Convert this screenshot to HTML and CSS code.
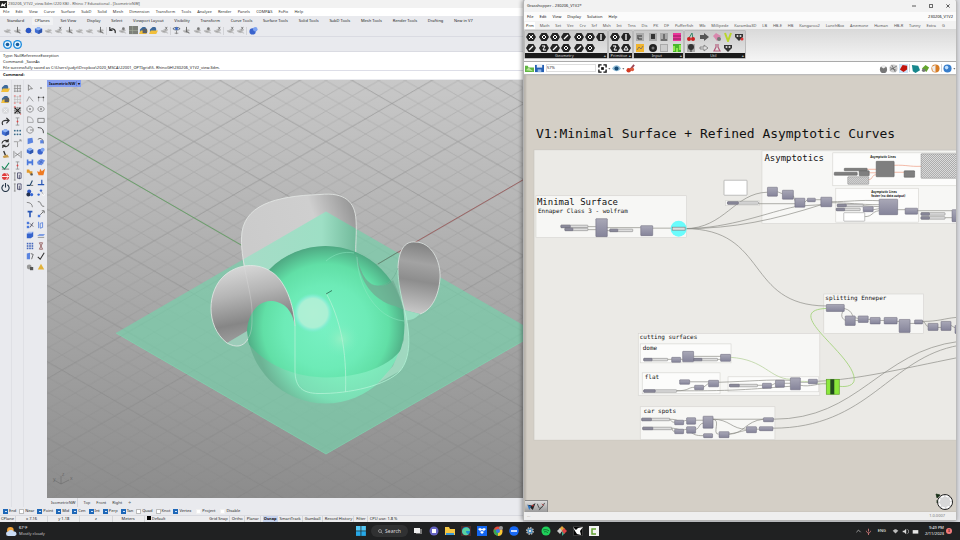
FILE: index.html
```html
<!DOCTYPE html>
<html lang="en">
<head>
<meta charset="utf-8">
<title>Rhino and Grasshopper</title>
<link rel="stylesheet" href="styles.css">
</head>
<body>
<main class="desktop">
  <section class="rhino" aria-label="Rhino">
    <header class="titlebar">
      <svg class="app-icon" viewBox="0 0 10 10"><rect width="10" height="10" fill="#222"/><path d="M1 8L3 3l2 2 4-3-2 4 1 3-3-2z" fill="#fff"/></svg>
      <span>230206_V1V2_view.3dm (220 KB) - Rhino 7 Educational - [IsometricNW]</span>
    </header>
    <nav class="menu" aria-label="Rhino menu">
      <a href="#">File</a><a href="#">Edit</a><a href="#">View</a><a href="#">Curve</a><a href="#">Surface</a><a href="#">SubD</a><a href="#">Solid</a><a href="#">Mesh</a><a href="#">Dimension</a><a href="#">Transform</a><a href="#">Tools</a><a href="#">Analyze</a><a href="#">Render</a><a href="#">Panels</a><a href="#">COMPAS</a><a href="#">FoFix</a><a href="#">Help</a>
    </nav>
    <div class="tool-tabs">
      <button>Standard</button><button class="active">CPlanes</button><button>Set View</button><button>Display</button><button>Select</button><button>Viewport Layout</button><button>Visibility</button><button>Transform</button><button>Curve Tools</button><button>Surface Tools</button><button>Solid Tools</button><button>SubD Tools</button><button>Mesh Tools</button><button>Render Tools</button><button>Drafting</button><button>New in V7</button>
    </div>
    <div class="toolbar"><div data-icons="plane axis sphere cube plane planex axis plane plane axis | undo planey darkgrid savefolder folder planex | eye axis planey planey planex | planex planex | cubes"></div></div>
    <div class="toolbar second"><div data-icons="ring ring"></div></div>
    <div class="history">
      <p>Type: NullReferenceException</p>
      <p>Command: _SaveAs</p>
      <p>File successfully saved as C:\Users\judyt\Dropbox\2020_MSCA\22001_OPTIgrid\5. RhinoGH\230206_V1V2_view.3dm.</p>
    </div>
    <div class="prompt"><label for="cmd">Command:</label><input id="cmd" type="text"></div>
    <div class="work">
      <div class="side narrow" data-icons="folder savefolder close redo cube refresh brush check redball power"></div>
      <div class="side narrow" data-icons="grid gridred netx vdim dots corner hx vdim vbox vbox"></div>
      <div class="side wide" data-icons="arrow point polyline curve circle ellipse arc rect ring2 fillet patch bend cube cubes pipe mesh puzzle burst trim split spheres dotsblue arc2 blend text scale arrayx align slab plate array hourglass cut tick hide cone"></div>
      <div class="view">
        <div class="viewport">
          <button class="view-title">IsometricNW <span>▾</span></button>
          <svg class="scene" viewBox="47 80 476 418" preserveAspectRatio="xMidYMid slice" role="img" aria-label="Isometric view of a sphere, a cutting plane and a minimal surface">
            <defs>
              <linearGradient id="ground" gradientUnits="userSpaceOnUse" x1="0" y1="80" x2="0" y2="498"><stop offset="0" stop-color="#c8c8c8"/><stop offset="1" stop-color="#8c8c8c"/></linearGradient>
              <linearGradient id="fade" gradientUnits="userSpaceOnUse" x1="0" y1="80" x2="0" y2="498"><stop offset="0" stop-color="#fff"/><stop offset=".7" stop-color="#999"/><stop offset="1" stop-color="#444"/></linearGradient>
              <mask id="gridfade"><rect x="0" y="0" width="600" height="560" fill="url(#fade)"/></mask>
              <pattern id="minor" width="26.4" height="15.24" patternUnits="userSpaceOnUse" patternTransform="translate(326 294)"><path d="M0 0L26.4 15.24M26.4 0L0 15.24" stroke="#555" stroke-width=".5" opacity=".3"/></pattern>
              <pattern id="major" width="132" height="76.2" patternUnits="userSpaceOnUse" patternTransform="translate(326 294)"><path d="M0 0L132 76.2M132 0L0 76.2" stroke="#444" stroke-width=".6" opacity=".25"/></pattern>
              <radialGradient id="ball" gradientUnits="userSpaceOnUse" cx="326" cy="327" r="84"><stop offset="0" stop-color="#78f1c3"/><stop offset=".5" stop-color="#6debb7"/><stop offset=".75" stop-color="#61dfa6"/><stop offset="1" stop-color="#4b9f7c"/></radialGradient>
              <radialGradient id="low" gradientUnits="userSpaceOnUse" cx="345" cy="335" r="88"><stop offset=".4" stop-color="#80efbf"/><stop offset=".75" stop-color="#7bdfb5"/><stop offset="1" stop-color="#6cb294"/></radialGradient>
              <linearGradient id="back" x1="0" y1=".3" x2="1" y2="0"><stop offset="0" stop-color="#cbcbcb"/><stop offset=".6" stop-color="#cfcfcf"/><stop offset="1" stop-color="#8c8c8c"/></linearGradient>
              <linearGradient id="backgreen" x1="0" y1="0" x2="1" y2="0"><stop offset="0" stop-color="#a6dcc7"/><stop offset=".7" stop-color="#9edfc5"/><stop offset="1" stop-color="#72ba9b"/></linearGradient>
              <linearGradient id="ear" x1=".3" y1="0" x2=".5" y2=".9"><stop offset="0" stop-color="#d9d9d9"/><stop offset=".4" stop-color="#b5b5b5"/><stop offset=".8" stop-color="#868686"/><stop offset="1" stop-color="#999"/></linearGradient>
              <linearGradient id="ear2" x1=".6" y1="0" x2=".5" y2="1"><stop offset="0" stop-color="#7f7f7f"/><stop offset=".3" stop-color="#a3a3a3"/><stop offset=".55" stop-color="#8d8d8d"/><stop offset="1" stop-color="#c8c8c8"/></linearGradient>
              <radialGradient id="shine"><stop offset="0" stop-color="#b0f0d4"/><stop offset=".72" stop-color="#acf0d4"/><stop offset=".85" stop-color="#84eed1"/><stop offset="1" stop-color="#75eec6" stop-opacity="0"/></radialGradient>
              <radialGradient id="shine2"><stop offset="0" stop-color="#94f0c4"/><stop offset="1" stop-color="#75eec0" stop-opacity="0"/></radialGradient>
              <clipPath id="planeclip"><path d="M116 333L326 211.500L537 333L326 454z"/></clipPath>
              <clipPath id="domeclip"><path d="M240 240H410V334C402 358 375 377 326 377.500C290 377 262 362 246 341z"/></clipPath>
            </defs>
            <rect x="0" y="0" width="600" height="560" fill="url(#ground)"/>
            <g mask="url(#gridfade)"><rect x="0" y="0" width="600" height="560" fill="url(#minor)"/><rect x="0" y="0" width="600" height="560" fill="url(#major)"/></g>
            <path d="M47 133L326 294" stroke="#5c9f5c" stroke-width=".8"/>
            <path d="M326 294L540 170" stroke="#9a5555" stroke-width=".8"/>
            <path d="M116 333L326 211.500L537 333L326 454z" fill="#78d0ab" opacity=".7"/>
            <path d="M116 333L326 454L537 333" fill="none" stroke="#7fd6b0" stroke-width=".7"/>
            <path d="M249 290C244 266 241 250 241.500 238C242 205 275 196 320 194.500C345 192 355 202 356 220C357 235 355 245 356 258L330 262L270 275z" fill="url(#back)"/>
            <path d="M249 290C244 266 241 250 241.500 238C242 205 275 196 320 194.500C345 192 355 202 356 220C357 235 355 245 356 258L330 262L270 275z" fill="url(#backgreen)" clip-path="url(#planeclip)"/>
            <path d="M249 290C244 266 241 250 241.500 238C242 205 275 196 320 194.500C345 192 355 202 356 220C357 235 355 245 356 258" fill="none" stroke="#e4e8e6" stroke-width=".8"/>
            <circle cx="325.500" cy="325" r="78.500" fill="url(#low)"/>
            <path d="M400 371C411 358 411 335 404 308L404 340L393 366L378 383z" fill="#a8ddc6" opacity=".8"/>
            <circle cx="325.500" cy="325" r="79" fill="url(#ball)" clip-path="url(#domeclip)"/>
            <circle cx="341" cy="339" r="18" fill="url(#shine2)"/>
            <circle cx="313" cy="313" r="20" fill="url(#shine)"/>
            <path d="M398 270C398 250 405 241 415 242C432 242 441 262 440 278C439 295 432 310 420 314L404 310C401 300 398 285 398 270z" fill="url(#ear2)"/>
            <path d="M404 310L420 314C415 319 410 321 405 320z" fill="#9bddc2"/>
            <path d="M357 257C361 276 368 286 378 286C386 286 391 283 393 280C397 288 401 300 404 310L395 306C374 301 359 281 357 257z" fill="#71aa92" opacity=".75"/>
            <path d="M398 270C398 250 405 241 415 242C432 242 441 262 440 278C439 295 432 310 420 314" fill="none" stroke="#e0e6e3" stroke-width=".8"/>
            <path d="M356 255C360 275 368 286 378 286C388 285 393 281 398 268" fill="none" stroke="#6fae94" stroke-width=".6"/>
            <path d="M227 343C205 326 207 290 225 275C242 261 261 265 270 271C285 279 294 305 295 326C292 308 282 301 270 301C255 302 247 318 247 332z" fill="url(#ear)"/>
            <path d="M227 343L247 331L248 339C243 347 236 348 227 343z" fill="#9cccb9"/>
            <path d="M248 339C243 347 236 348 227 343C205 326 207 290 225 275C242 261 261 265 270 271C285 279 294 305 295 326" fill="none" stroke="#e4e8e6" stroke-width=".8"/>
            <path d="M243 258C246 280 253 300 252 316C252 326 252 333 247 340" fill="none" stroke="#ddd" stroke-width=".6" opacity=".6"/>
            <path d="M295 326V370C295 388 303 393 318 393.500C350 394 387 385 400 371C411 358 411 335 404 308C401 296 398 282 398 270M326 293C340 318 347 350 345.500 392" fill="none" stroke="#b2f2d6" stroke-width=".8"/>
            <path d="M326 261C334 254 344 251 354 253M357 257C358 285 375 318 404 321" fill="none" stroke="#8fe9c3" stroke-width=".5"/>
            <path d="M326 294L332 290.500" stroke="#286b50" stroke-width=".8"/>
            <path d="M378 264L398 252" stroke="#5d7d6b" stroke-width=".8"/>
            <g stroke="#6c6c6c" stroke-width=".6" fill="none"><path d="M61 484V476M61 484L54 480M61 484L69 480"/></g>
            <g class="axis-names"><text x="62" y="476">z</text><text x="53" y="481">y</text><text x="70" y="480">x</text></g>
          </svg>
        </div>
        <div class="view-tabs"><button class="active">IsometricNW</button><button>Top</button><button>Front</button><button>Right</button><button aria-label="Add view">✧</button></div>
      </div>
    </div>
    <div class="osnap">
      <label><input type="checkbox" checked>End</label><label><input type="checkbox">Near</label><label><input type="checkbox" checked>Point</label><label><input type="checkbox" checked>Mid</label><label><input type="checkbox" checked>Cen</label><label><input type="checkbox" checked>Int</label><label><input type="checkbox" checked>Perp</label><label><input type="checkbox" checked>Tan</label><label><input type="checkbox">Quad</label><label><input type="checkbox">Knot</label><label><input type="checkbox" checked>Vertex</label><label class="faint"><input type="checkbox">Project</label><label class="faint"><input type="checkbox">Disable</label>
    </div>
    <footer class="status">
      <div class="coords"><span>CPlane</span><span>x 7.16</span><span>y 1.18</span><span>z</span><span>Meters</span><span><i class="swatch"></i>Default</span></div>
      <div class="toggles"><button>Grid Snap</button><button>Ortho</button><button>Planar</button><button class="on">Osnap</button><button>SmartTrack</button><button>Gumball</button><button>Record History</button><button>Filter</button><span>CPU use: 1.8 %</span></div>
    </footer>
  </section>

  <section class="gh" aria-label="Grasshopper">
    <header class="gh-title"><span>Grasshopper - 230206_V1V2*</span>
      <div class="win"><button aria-label="Minimize"><svg viewBox="0 0 10 10"><path d="M0 5h10"/></svg></button><button aria-label="Maximize"><svg viewBox="0 0 10 10"><path d="M1 1h8v8H1z"/></svg></button><button aria-label="Close"><svg viewBox="0 0 10 10"><path d="M1 1l8 8M9 1L1 9"/></svg></button></div>
    </header>
    <nav class="gh-menu" aria-label="Grasshopper menu"><a href="#">File</a><a href="#">Edit</a><a href="#">View</a><a href="#">Display</a><a href="#">Solution</a><a href="#">Help</a><span>230206_V1V2</span></nav>
    <div class="gh-tabs">
      <button class="active">Prm</button><button>Math</button><button>Set</button><button>Vec</button><button>Crv</button><button>Srf</button><button>Msh</button><button>Int</button><button>Trns</button><button>Dis</button><button>PK</button><button>DF</button><button>Pufferfish</button><button>Wb</button><button>Millipede</button><button>Karamba3D</button><button>LB</button><button>HB-E</button><button>HB</button><button>Kangaroo2</button><button>LunchBox</button><button>Anemone</button><button>Human</button><button>HB-R</button><button>Tunny</button><button>Extra</button><button>G</button>
    </div>
    <div class="ribbon">
      <div class="group"><div class="cells"><div data-icons="hexx hexs"></div><div data-icons="hexo hexz hexo hexs hexs hexo"></div><div data-icons="hexo hexs hexo hexo hexi"></div></div><p>Geometry<b>+</b></p></div>
      <div class="group"><div class="cells"><div data-icons="hexo hexz hexi hexa"></div></div><p>Primitive<b>+</b></p></div>
      <div class="group"><div class="cells"><div data-icons="slider graph"></div><div data-icons="switch knob scribble panel"></div><div data-icons="pink green"></div></div><p>Input<b>+</b></p></div>
      <div class="group"><div class="cells"><div data-icons="cherry tree"></div><div data-icons="right rightopen"></div><div data-icons="gem flask vee mask mask2"></div></div><p>Util<b>+</b></p></div>
    </div>
    <div class="gh-bar">
      <div data-icons="newfile floppy"></div>
      <select aria-label="Zoom"><option>57%</option></select>
      <div data-icons="frame caret eyeblue caret brushred"></div>
      <div class="modes" data-icons="cyl wire gemred | teal leaf orange | globe caret"></div>
    </div>
    <div class="canvas">
      <svg viewBox="524 75 433 438" preserveAspectRatio="xMinYMin slice" role="img" aria-label="Node graph">
        <defs>
          <linearGradient id="node" x1="0" y1="0" x2="0" y2="1"><stop offset="0" stop-color="#a9a8b7"/><stop offset="1" stop-color="#85849a"/></linearGradient>
          <pattern id="check" width="2" height="2" patternUnits="userSpaceOnUse"><rect width="2" height="2" fill="#eee"/><path d="M0 0h1v1H0zM1 1h1v1H1z" fill="#999"/></pattern>
        </defs>
        <rect x="534" y="150" width="430" height="291" fill="#ebeae6" stroke="#c6c2bb" stroke-width=".6"/>
        <g id="groups"></g>
        <g class="wires">
          <path d="M588 227h8M588 230h8M607 228h34M607 231h3M653 228.500h19"/>
          <path d="M685 229C725 229 735 193 768 192.500M685 229C730 229 770 212 796 207M685 229C735 229 775 220 822 205M685 229C770 229 745 306 827 306.500"/>
          <path d="M759 204H796M778 192l5 2M794 196l2 6M805 203l3-3M816 200l6 0M805 206l17-1M832 202C850 202 860 200 880 201M832 203C850 203 860 205 880 205M864 206l16 1M874 210l6-1M865 217C874 217 872 212 880 211M898 210h8M918 211h35M946 218h7"/>
          <path d="M845 309C856 312 850 318 859 319M845 309C838 320 848 321 846 321M856 321h3M869 320h2M881 321h4M898 322h2M911 324h5M923 322C940 322 945 319 957 318M923 322C927 322 926 327 929 327M939 328h3M952 326l5 3"/>
          <path d="M668 360h4M681 360h2M694 357h27M718 360h3M690 382.500h19M677 391.500C690 391.500 688 388 695 388M704 388l5-4M677 391.500C740 392 760 389 791 387M719 383C750 382 770 380 791 381M758 386h5M772 386l4-2M785 384h6M801 383h8M801 386C810 388 820 384 827 384"/>
          <path d="M670 420C680 420 678 424 687 421M670 420C673 423 672 423 675 423M672 429C678 429 680 432 687 430M672 429C674 432 672 432 675 432M696 421h8M696 430C700 430 699 424 704 424M713 420h51M713 420C722 420 712 435 719 435M713 420C730 420 732 430 747 430M729 435C745 435 745 422 764 420M729 435C740 433 742 432 747 431M757 430h3M687 430C695 436 696 436.500 704 436.500"/>
          <path d="M774 420C860 420 880 352 960 342M773 429C870 429 890 358 960 346M818 382C860 380 900 370 960 358"/>
        </g>
        <g fill="none" stroke="#ed9b82" stroke-width=".7"><path d="M868 169.500h9M870 173h7M869 180C874 180 872 175 877 175M895 165.500C908 165 910 167 922 166.500M895 172.500h10"/></g>
        <g fill="none" stroke-width=".9"><path stroke="#c0d7a9" d="M731 358C765 360 770 379 791 380M801 382C812 382 816 384 827 385"/><path stroke="#a4d37c" d="M827 309C780 311 855 355 855 380C855 386 848 388 840 387"/></g>
        <g id="nodes"></g>
        <circle cx="679" cy="229" r="8" fill="#6afcfc"/><rect x="672.500" y="227.500" width="13" height="3" fill="#ddd" stroke="#777" stroke-width=".6"/>
        <rect x="827" y="380" width="13" height="15" fill="#8be83c" stroke="#5fa02a" stroke-width=".7"/><rect x="831" y="380" width="4" height="15" fill="#234a1f"/>
        <g class="mono">
          <text class="head" x="536" y="138">V1:Minimal Surface + Refined Asymptotic Curves</text>
          <text class="mid" x="537" y="205">Minimal Surface</text><text class="mid" x="765" y="161">Asymptotics</text>
          <text x="538" y="213">Ennaper Class 3 - wolfram</text><text x="826" y="301">splitting Enneper</text><text x="640" y="340">cutting surfaces</text><text x="643" y="351">dome</text><text x="645" y="380">flat</text><text x="644" y="414">car spots</text>
        </g>
        <g class="tiny"><text x="871" y="158">Asymptotic Lines</text><text x="872" y="193">Asymptotic Lines</text><text x="872" y="197">faster (no data output)</text></g>
        <g><circle cx="946" cy="503" r="7.500" fill="#d8d8d8" stroke="#222" stroke-width="1"/><circle cx="946" cy="503" r="6" fill="none" stroke="#fff" stroke-width="1.500" stroke-dasharray="3 1.700"/><path d="M937 495l4 1-3 3zM938 501v3" fill="#162f16" stroke="#162f16" stroke-width=".8"/></g>
      </svg>
      <div class="corner" data-icons="bird pen"></div>
    </div>
    <footer class="gh-status"><span>...</span><span>1.0.0007</span></footer>
  </section>
</main>

<footer class="taskbar">
  <div class="weather"><svg viewBox="0 0 10 10"><circle cx="4" cy="4" r="3" fill="#f3a53a"/><path d="M2 9a2 2 0 0 1 0-4 3 3 0 0 1 5 0 2 2 0 0 1 1 4z" fill="#c9dcf5"/></svg><p>67°F<br><span>Mostly cloudy</span></p></div>
  <div class="apps">
    <div data-icons="windows"></div>
    <button class="search"><svg viewBox="0 0 10 10"><circle cx="4" cy="4" r="3"/><path d="M6 6l3 3"/></svg>Search</button>
    <div class="pinned" data-icons="taskview chat explorer edge dropbox chrome zoom gear spotify git rhino camtasia"></div>
  </div>
  <div class="tray"><div data-icons="up mic"></div><span>ENG</span><div data-icons="wifi volume battery"></div><p>9:49 PM<br>2/11/2023</p><b>3</b></div>
</footer>
<script src="app.js"></script>
</body>
</html>
```

FILE: styles.css
```css
* { box-sizing: border-box; }
body { margin: 0; height: 100vh; display: flex; flex-direction: column; overflow: hidden; background: #dcdde2; color: #222; font: 4px/6px "Noto Sans", "Open Sans", sans-serif; }
p { margin: 0; }
a { color: inherit; text-decoration: none; }
button, input, select { font: inherit; color: inherit; margin: 0; padding: 0; border: 0; background: none; }
button { white-space: nowrap; }
svg { display: block; }
[data-icons] { display: flex; align-items: center; }
[data-icons] button { flex: none; width: 9px; height: 9px; }
[data-icons] svg { width: 100%; height: 100%; }
[data-icons] hr { width: 1px; height: 8px; margin: 0; border: 0; background: #d2d3d7; }

.desktop { flex: 1; min-height: 0; display: grid; grid-template-columns: 523fr 437fr; }
.rhino { min-width: 0; min-height: 0; display: flex; flex-direction: column; background: #e9eaee; }
.titlebar { height: 8px; display: flex; align-items: center; gap: 1px; background: #f2f2f2; color: #555; }
.app-icon { width: 7px; height: 7px; }
.menu { height: 8px; display: flex; align-items: center; justify-content: space-between; padding: 0 42% 0 3px; background: #fff; color: #333; }
.tool-tabs { height: 9px; display: flex; align-items: stretch; justify-content: space-between; padding: 1px 9% 0 4px; }
.tool-tabs button { padding: 0 3px; }
.tool-tabs .active { background: #f1f2f4; border-radius: 2px 2px 0 0; }
.toolbar { height: 12px; display: flex; align-items: center; padding-left: 3px; border-bottom: 1px solid #dadbe2; }
.toolbar [data-icons] { width: 49%; justify-content: space-between; }
.toolbar.second { height: 15px; padding-left: 3px; }
.toolbar.second [data-icons] { width: auto; gap: 1px; }
.history { height: 19px; padding: 1px 3px 0; background: #fff; border-bottom: 1px solid #dddee8; }
.prompt { height: 8px; display: flex; align-items: center; padding-left: 3px; background: #fff; color: #111; font-weight: 700; }
.prompt input { flex: 1; height: 6px; outline: 0; }
.work { flex: 1; min-height: 0; display: flex; padding-top: 1px; }
.side { display: grid; align-content: start; flex: none; padding-top: 3px; border-right: 1px solid #dfe0e5; }
.side.narrow { width: 12px; grid-auto-rows: 11px; justify-items: center; }
.side.wide { width: 23px; height: 192px; grid-template-columns: 11px 11px; align-content: stretch; justify-items: center; border: 0; }
.side.wide button { width: 8px; height: 8px; }
.view { flex: 1; min-width: 0; display: flex; flex-direction: column; }
.viewport { position: relative; flex: 1; min-height: 0; overflow: hidden; }
.scene { width: 100%; height: 100%; }
.view-title { position: absolute; top: 0; left: 0; height: 7px; padding: 0 1px 0 2px; background: #849df0; color: #112; font-weight: 700; line-height: 7px; }
.view-title span { padding-left: 1px; border-left: 1px solid #6d83ce; }
.axis-names { font: 5px "Open Sans", sans-serif; fill: #666; }
.view-tabs { height: 9px; display: flex; align-items: stretch; gap: 6px; padding-left: 3px; color: #333; }
.view-tabs .active { padding: 0 1px; border-right: 1px solid #d4d5da; }
.osnap { height: 9px; display: flex; align-items: center; gap: 3px; padding-left: 3px; border-bottom: 1px solid #d9dae0; }
.osnap label { display: flex; align-items: center; gap: 1px; }
.osnap input { appearance: none; width: 5px; height: 5px; background: #fff; border: 1px solid #bbb; }
.osnap input:checked { background: #1f68b8; border-color: #1f68b8; }
.osnap input:checked::after { content: ""; display: block; width: 2px; height: 1px; margin: 1px 0 0 1px; background: #cfe2f8; }
.osnap .faint { margin-left: 2px; }
.osnap .faint input { border-color: #f1f1f1; }
.status { height: 6px; display: flex; background: #ececee; }
.coords { width: 40%; display: grid; grid-template-columns: 16px 2fr 2fr 2fr 2fr 4fr; text-align: center; }
.coords span { border-right: 1px solid #d4d5d8; }
.coords span:first-child { text-align: left; padding-left: 1px; }
.coords span:last-child { text-align: left; padding-left: 2px; border: 0; }
.swatch { display: inline-block; width: 4px; height: 4px; margin-right: 1px; background: #000; }
.toggles { flex: 1; display: flex; gap: 2px; }
.toggles button { padding: 0 1px 0 0; border-right: 1px solid #d4d5d8; }
.toggles .on { padding: 0 1px; background: #c8d4ee; color: #111; font-weight: 700; border: 0; }

.gh { z-index: 1; min-width: 0; min-height: 0; display: flex; flex-direction: column; margin: 0 3px 1px 0; border: 1px solid #b4b4b4; border-top: 0; border-right-color: #bbb; border-radius: 2px; background: #f2f2f2; box-shadow: -1px 0 4px #0006; }
.gh-title { height: 12px; display: flex; align-items: center; justify-content: space-between; padding: 0 6px 0 3px; }
.win { display: flex; gap: 13px; }
.win svg { width: 4px; height: 4px; fill: none; stroke: #333; stroke-width: 2; }
.gh-menu { height: 9px; display: flex; align-items: center; gap: 6px; padding: 0 3px; background: #fbfbfb; color: #111; }
.gh-menu span { margin-left: auto; }
.gh-tabs { height: 8px; display: flex; justify-content: space-between; padding: 1px 10px 0 1px; color: #555; }
.gh-tabs button { padding: 0 1px; }
.gh-tabs .active { padding: 0 1px; background: #fff; color: #222; }
.ribbon { height: 33px; display: flex; align-items: flex-start; padding-top: 1px; background: linear-gradient(#d9d9d9, #f5f5f5); border-bottom: 1px solid #aaa; }
.group { background: linear-gradient(#c9c9c9, #e9e9e9); border: 1px solid #bbb; border-radius: 1px; }
.cells { display: flex; gap: 3px; padding: 0 1px; }
.cells [data-icons] { display: grid; grid-template-rows: 11px 11px; grid-auto-flow: column; gap: 0 1px; }
.cells [data-icons] button { width: 10px; height: 10px; }
.group p { display: grid; grid-template-columns: 1fr auto; justify-items: center; height: 5px; padding-right: 1px; background: #1b1b1b; color: #ddd; line-height: 5px; }
.gh-bar { height: 13px; display: flex; align-items: center; gap: 2px; padding-left: 1px; background: #fff; border-bottom: 1px solid #bbb; }
.gh-bar [data-icons] { gap: 1px; }
.gh-bar select { width: 50px; height: 8px; appearance: none; border: 1px solid #ddd; color: #222; line-height: 6px; background: #fff; }
.gh-bar .modes { margin-left: auto; gap: 1px; }
.gh-bar [data-name="caret"] { width: 3px; }
.canvas { position: relative; flex: 1; min-height: 0; overflow: hidden; background: #d4cfc6; box-shadow: inset 2px 0 2px #0002; }
.canvas > svg { width: 100%; height: 100%; }
.corner { position: absolute; left: 1px; bottom: 0; padding: 1px; background: linear-gradient(#ddd, #999); border-top: 1px solid #888; border-right: 1px solid #888; }
.corner[data-icons] button { width: 10px; }
.wires path { fill: none; stroke: #8d8d88; stroke-width: .7; }
.mono { font: 6px "DejaVu Sans Mono", monospace; fill: #111; }
.mono .head { font-size: 13px; }
.mono .mid { font-size: 9px; }
.tiny { font: 700 3px "Open Sans", sans-serif; fill: #222; }
.gh-status { height: 8px; display: flex; align-items: center; justify-content: space-between; padding: 0 11px 0 3px; background: #eee; color: #777; }

.taskbar { height: 18px; flex: none; display: grid; grid-template-columns: 1fr auto 1fr; align-items: center; background: #202122; color: #fff; }
.weather { display: flex; align-items: center; gap: 2px; padding-left: 6px; }
.weather svg { width: 11px; height: 11px; }
.weather span { color: #ccc; }
.apps { display: flex; align-items: center; gap: 5px; padding-right: 5px; }
.search { display: flex; align-items: center; gap: 2px; height: 12px; padding: 0 7px; border-radius: 6px; background: #303132; color: #ddd; font-size: 5px; }
.search svg { width: 5px; height: 5px; fill: none; stroke: #ddd; stroke-width: 1; }
.apps [data-icons] button { width: 10px; height: 10px; }
.apps .pinned { gap: 6px; }
.pinned [data-name="edge"] { background: #4c2b2b; }
.pinned [data-name="rhino"] { background: #363636; }
.tray { display: flex; align-items: center; justify-content: flex-end; gap: 6px; padding-right: 8px; text-align: right; }
.tray [data-icons] { gap: 3px; }
.tray [data-icons] button { width: 7px; height: 7px; }
.tray b { width: 6px; height: 6px; margin-left: -4px; border-radius: 3px; background: #f47c7c; color: #722; text-align: center; }
```

FILE: app.js
```js
const line = (d, c = "#555", w = 1) => `<path d="${d}" fill="none" stroke="${c}" stroke-width="${w}"/>`;
const fill = (d, c) => `<path d="${d}" fill="${c}"/>`;
const dot = (x, y, r, c) => `<circle cx="${x}" cy="${y}" r="${r}" fill="${c}"/>`;
const box = (x, y, w, h, c) => `<rect x="${x}" y="${y}" width="${w}" height="${h}" fill="${c}"/>`;
const plane = fill("M1 6l4-3 4 2-4 3z", "#c4c4c4") + line("M1 5l8 3M3 7l5-3", "#999", .6);
const cube = fill("M1 3l4-2 4 2v4L5 9 1 7z", "#3f6dd2") + fill("M1 3l4-2 4 2-4 2z", "#8fb4f5") + fill("M5 5l4-2v4L5 9z", "#2f55ab");
const folder = fill("M1 4l3-3h3l1 2v5H1z", "#3d6a9c") + fill("M0 9l2-4h8L8 9z", "#f2bf3a");
const hex = fill("M2.500 1h5L10 5 7.500 9h-5L0 5z", "#242424");
const tile = box(1, 1, 8, 8, "#aaa");
const mask = fill("M1 2h8v3L5 9 1 5z", "#333") + dot(3.500, 4, 1, "#ddd") + dot(6.500, 4, 1, "#ddd");
const grid = line("M1 2h8M1 5h8M1 8h8M2 1v8M5 1v8M8 1v8", "#888", .8);

const ICONS = {
  plane, planex: plane + line("M6 1l2 3M8 1L6 4", "#777"), planey: plane + dot(6, 3, 1.500, "#777"),
  axis: plane + line("M5 7V1M5 6l3 2", "#666"), sphere: plane + dot(5, 5, 3, "#2a56c6"), cube,
  undo: line("M8 8c1-5-4-6-6-3M2 1v4h3", "#333", 1.300), redo: line("M2 9c-2-4 1-6 6-5M6 1l3 3-3 3", "#333", 1.300),
  grid, darkgrid: box(0, 0, 10, 9, "#7d8079") + line("M0 5h10M4 0v9", "#a9b09f", .6), gridred: line("M1 2h8M1 5h8M1 8h8M2 1v8M5 1v8M8 1v8", "#bbb", .7) + line("M1 1h2M7 1h2M1 9h2M7 9h2", "#e66", 1),
  folder, savefolder: folder + box(4, 3, 5, 5, "#5a5f68"), eye: line("M1 3c2-2 6-2 8 0-2 2-6 2-8 0", "#345", .8) + dot(5, 3, 1.500, "#36c") + line("M5 5v4M3 8h4", "#888"),
  ring: dot(5, 5, 5, "#1d8bdd") + dot(5, 5, 3.500, "#e3f2fc") + dot(5, 5, 2, "#165c9e"),
  close: dot(5, 5, 4, "#d8d9dc") + line("M3 3l4 4M7 3L3 7", "#f3f3f3"),
  refresh: line("M8 3a4 4 0 0 0-7 2M2 7a4 4 0 0 0 7-2M8 0v3H5M2 10V7h3", "#333", 1.200),
  brush: line("M3 1l2 5", "#333", 1.500) + fill("M2 7l5-2 2 3-6 1z", "#c79b4a"), check: line("M1 6l3 3 5-7", "#185", 1.200) + line("M1 9h8", "#777"),
  redball: dot(5, 5, 4, "#de3c3c") + line("M1 5h8M5 1c3 3 3 5 0 8", "#fff"), power: line("M3 2a4 4 0 1 0 4 0M5 0v5", "#234", 1.200),
  netx: grid + line("M2 2l6 6M8 2L2 8", "#222", 1.300) + line("M1 1h2M8 9h1", "#e33"),
  vdim: line("M5 1v8M3 1h4M3 9h4", "#888", .8) + dot(5, 5, 1, "#d44"), dots: [2, 5, 8].map(x => dot(x, 3, 1, "#386a88") + dot(x, 7, 1, "#386a88")).join(""),
  corner: line("M1 3h4v6M6 3l3-2M7 1h2v2", "#888", .8), hx: line("M1 1v8M9 1v8M2 3l6 4M8 3L2 7", "#777", .8),
  vbox: line("M2 1v8M1 1h2M1 9h2", "#777", .8) + line("M5 1h4v6H5zM7 3v5", "#446", .9),
  arrow: line("M3 1v7l2-2 3 0z", "#555", .8), point: dot(5, 5, 1, "#555"), polyline: line("M1 8l3-6 5 6", "#777", .8), curve: line("M2 8V3h6v5", "#888", .8) + dot(2, 3, 1, "#444") + dot(8, 3, 1, "#444"),
  circle: line("M5 1a4 4 0 1 0 .1 0", "#777", .9) + dot(5, 5, 1, "#444"), ellipse: line("M5 2a4 3 0 1 0 .1 0", "#777", .9) + dot(5, 5, 1, "#444"),
  arc: line("M2 1c7 0 7 5 7 7H2z", "#888", .8), rect: line("M1 3h8v5H1z", "#666", .9), ring2: line("M5 1a4 4 0 1 0 .1 0M5 5h4", "#777", .9), fillet: line("M1 2c6 0 7 3 7 7", "#444", 1.200),
  patch: fill("M2 2l6-1 1 6-7 2z", "#5b84e0"), bend: line("M1 3c4-3 7 0 7 5", "#555") + fill("M4 4h4v4H4z", "#5b84e0"),
  cubes: dot(4, 6, 3.500, "#3a63cd") + dot(7, 3.500, 2.500, "#7da3f1"), pipe: fill("M1 2h2v2h4V2h2v7H7V7H3v2H1z", "#4b79dc"), mesh: fill("M0 5l5-4 5 2-4 6-5-1z", "#6b90e6") + line("M2 3l6 4M3 8l4-6", "#2a4ca8", .6),
  puzzle: fill("M1 2h3l1 2 3 0v4H5L4 6 1 6z", "#e49a2b") + dot(7, 8, 1.500, "#555"), burst: fill("M2 9L0 4l3 1 1-4 2 3 4-3-2 8z", "#ee7a22"), trim: line("M1 8h4l3-6", "#246", 1.400) + line("M6 8h3", "#555"), split: line("M1 7h8M6 1v6", "#2856b5", 1.500),
  spheres: dot(4, 3, 2.500, "#2d57c4") + dot(3, 7, 2.500, "#222f4d") + dot(7, 7, 2, "#3567d4"), dotsblue: dot(5, 2, 1.500, "#3567d4") + dot(2, 7, 1.500, "#3567d4") + dot(8, 7, 1.500, "#fff") + line("M5 2l3 5", "#777", .6),
  arc2: line("M1 3c4 0 7 2 7 6", "#666", .9), blend: line("M1 2c6 0 2 6 8 6", "#555", .9), text: line("M2 2h6M5 2v7", "#2856b5", 2), scale: box(1, 6, 3, 3, "#4b79dc") + line("M4 6l4-4M6 1h3v3", "#555"),
  arrayx: box(1, 1, 3, 3, "#4b79dc") + box(1, 6, 3, 3, "#4b79dc") + line("M5 3l4 4M9 2L5 8", "#445"), align: line("M2 1v8M4 3l3-1v6l-3 1z", "#4b79dc"), slab: fill("M1 3l8-2v6L6 9H1z", "#3563cc") + fill("M1 3l2-2h6L7 3z", "#a7c0f4"), plate: fill("M0 6l3-2h7L8 6z", "#5b84e0") + line("M1 8h8", "#888"),
  array: [2, 5, 8].map(x => [2, 5, 8].map(y => box(x - 1, y - 1, 2, 2, "#4466bb")).join("")).join(""), hourglass: line("M3 1h4L3 9h4L3 1", "#966", 1.200), cut: fill("M1 2l4-1v8H1z", "#5b84e0") + line("M6 2l3 1-2 6", "#555"), tick: line("M1 6l3 3 5-8", "#333", 1.300), hide: dot(4, 5, 3, "#999") + box(5, 5, 4, 4, "#555"), cone: fill("M5 1l4 7H1z", "#e2b23a"),
  hexx: hex + line("M3 3l4 4M7 3L3 7", "#fff"), hexs: hex + line("M3 7l4-4", "#fff", 1.300), hexo: hex + line("M5 3l2 2-2 2-2-2z", "#fff"), hexz: hex + line("M3 3h3L4 7h3", "#fff"), hexi: hex + line("M5 2v6", "#fff", 1.300), hexa: hex + line("M3 7l2-4 2 4z", "#fff"),
  slider: tile + line("M3 3v4h4M4 4h3", "#333"), graph: box(1, 1, 8, 8, "#f0b42d") + line("M2 7l2-3 2 2 2-3", "#876"), switch: tile + box(3, 2, 4, 5, "#333"), knob: dot(5, 5, 4, "#222") + dot(5, 5, 1.500, "#777"), scribble: tile + line("M5 2v5M2 8h6", "#333"), panel: tile + line("M2 3h6M2 5h6M2 7h6", "#eee"),
  pink: box(1, 1, 8, 8, "#eb369b") + line("M1 4h8M1 7h8", "#8c1c58"), green: box(1, 1, 8, 8, "#49b82d") + line("M2 8V3M5 9V5M8 7V2", "#a7f65d", 1.500),
  cherry: line("M3 6l3-5 1 6", "#386") + dot(3, 7, 2, "#c22") + dot(7, 7, 2, "#c22"), tree: tile + dot(5, 4, 3, "#333") + line("M5 5v4", "#333"), right: fill("M1 3h4V1l5 4-5 4V7H1z", "#555"), rightopen: line("M1 4h4V2l4 3-4 3V6H1z", "#777", .8), gem: fill("M1 4l3-3 5 3-4 5z", "#d887ad") + dot(7, 7, 2, "#777"), flask: line("M4 1v3L2 8h6L6 4V1", "#b45e7d", 1.200), vee: line("M2 1l3 8 3-8", "#b9d52b", 2), mask, mask2: mask + dot(8, 7, 1.500, "#d33"),
  newfile: fill("M0 2h3l1 2h6v5H0z", "#61b643") + fill("M1 7l3-3 5 4z", "#b7e597"), floppy: box(0, 1, 10, 8, "#245fb4") + box(2, 1, 6, 3, "#e9eef5") + box(3, 6, 4, 3, "#91b6e5"), frame: line("M1 4V1h3M6 1h3v3M9 6v3H6M4 9H1V6", "#111", 1.500) + box(3.500, 3.500, 3, 3, "#111"), caret: fill("M1 4h7l-3.500 4z", "#444"), eyeblue: fill("M0 5c3-5 7-5 10 0-3 4-7 4-10 0", "#91bdd8") + dot(5, 5, 2.300, "#174b75"), brushred: line("M9 1L5 6", "#945", 2) + dot(3, 7, 2.500, "#d33a22") + dot(7, 6, 2, "#e0583c"),
  cyl: dot(5, 6, 4, "#777") + fill("M2 3l3-2 3 2-3 2z", "#eee"), wire: dot(5, 5, 4.500, "#ccc") + line("M1 4l7 3M3 1l4 8M1 7l8-5", "#555", .7), gemred: box(0, 0, 10, 10, "#cfe4f7") + fill("M1 6l3-5 5 1v4L5 9z", "#c2150d"), teal: fill("M1 1l7 1 2 5-5 3-3-2z", "#17878c"), leaf: fill("M1 5l4-4 4 3-3 5z", "#62a62b") + dot(3, 7, 2, "#777"), orange: dot(5, 5, 4.500, "#d77c25") + fill("M1 3l4-2v8l-3-1z", "#eee"), globe: dot(5, 5, 4.500, "#377dcb") + dot(4, 4, 2, "#c0e0ff"),
  bird: fill("M1 3l5 1 4-3-3 8z", "#222") + fill("M1 3l4 2-2 4z", "#2e75c2") + dot(7, 4, 1, "#c33"), pen: line("M1 2c2 7 4 7 8-1M3 9l3-4", "#444", 1) + line("M6 2l2 2", "#b33"),
  windows: box(0, 0, 4.600, 4.600, "#52c7f5") + box(5.300, 0, 4.600, 4.600, "#52c7f5") + box(0, 5.300, 4.600, 4.600, "#26a8e8") + box(5.300, 5.300, 4.600, 4.600, "#26a8e8"),
  taskview: box(3, 3, 6, 5, "#777") + box(1, 2, 6, 5, "#eee"), chat: dot(5, 5, 4.500, "#6664c2") + box(3, 3, 4, 4, "#fff"), explorer: fill("M0 1h4l1 2h5v6H0z", "#f5c744") + box(1, 7, 8, 2, "#3c98d6"), edge: dot(5, 5, 4, "#1b91cf") + fill("M1 5c2-5 8-4 8 0H5c0 2 1 3 3 3-4 3-7 0-7-3", "#5bd2a0"), dropbox: box(0, 0, 10, 10, "#1266f1") + fill("M1 3l2-1 2 1 2-1 2 1-2 2-2-1-2 1zM3 6l2-1 2 1-2 2z", "#fff"),
  chrome: dot(5, 5, 4.500, "#e34d3d") + fill("M1 3l4 2v5C1 9 0 6 1 3z", "#36a852") + fill("M5 5l4-2c1 4 0 7-4 7z", "#f7c935") + dot(5, 5, 2, "#3b78e7") + dot(8, 2, 2, "#999"), zoom: dot(5, 5, 4.800, "#1769f5") + box(2, 4, 6, 2, "#c9dcff"), gear: `<circle cx="5" cy="5" r="3" fill="#2b86c9" stroke="#aaa" stroke-width="2" stroke-dasharray="1.500 .8"/>` + dot(5, 5, 1.300, "#ddd"), spotify: dot(5, 5, 4.500, "#1fd15b") + line("M2 4c3-1 5 0 6 1M3 6c2-1 3 0 4 1", "#173", 1), git: fill("M5 0l3 3-3 3-3-3z", "#e3a63b") + fill("M5 4l3 3-3 3z", "#3a8") + fill("M3 2L0 5l3 3 2-3z", "#ccc") + fill("M7 2l3 3-3 3-2-3z", "#d44"), rhino: box(1, 1, 8, 8, "#050505") + fill("M0 1l3 3 2-2 5-1-3 4 1 4-4-1-2-3z", "#fff"), camtasia: box(0, 0, 10, 10, "#f3f3f3") + line("M7 3H3v5h4", "#63a333", 1.500),
  up: line("M2 6l3-3 3 3", "#ccc"), mic: line("M5 1v4M2 4c0 4 6 4 6 0M5 7v3", "#c77", 1.300), wifi: fill("M1 4c3-3 5-3 8 0L5 8z", "#bbb"), volume: fill("M1 4h2l3-3v8L3 6H1z", "#ddd") + line("M8 2c2 2 2 4 0 6", "#ddd"), battery: box(1, 3, 8, 5, "#e5e5e5"),
};

document.querySelectorAll("[data-icons]").forEach(bar => {
  bar.dataset.icons.split(" ").forEach(name => {
    if (name === "|") { bar.append(document.createElement("hr")); return; }
    const button = document.createElement("button");
    button.dataset.name = name;
    button.setAttribute("aria-label", name);
    button.innerHTML = `<svg viewBox="0 0 10 10">${ICONS[name]}</svg>`;
    bar.append(button);
  });
});

const groups = [[536,196,151,42],[762.5,151,200,73],[833.5,153,130,33],[836.5,188.5,83,34],[824.5,294.5,100,39.5],[638.5,334,182,62],[640.5,344.5,91,19],[642.5,373.5,78,21],[728.5,377.5,91,15],[640.5,407.5,135,33],[726,201,34,5]];
document.getElementById("groups").innerHTML = groups.map(([x, y, w, h]) => `<rect x="${x}" y="${y}" width="${w}" height="${h}" fill="#fff" fill-opacity=".6" stroke="#d4d3cf" stroke-width=".6"/>`).join("");

const rect = (x, y, w, h, f, s = "#666475") => `<rect x="${x}" y="${y}" width="${w}" height="${h}" rx=".5" fill="${f}" stroke="${s}" stroke-width=".5"/>`;
const nodes = [[596,219,11.5,18],[641,226,12,10],[768,187.5,10,9],[783,190.5,11,9],[795.5,198.5,10,9],[808,198.5,8,3.5],[821.5,197.5,11,9.5],[880,199.5,18.5,15.5],[906,208.5,12.5,6],[953,210,8,12],[864,207,10,5],
  [827,305,18,7],[846,316.5,10,9.5],[859,316.5,10,6.5],[871,318,10,6.5],[885,318,13,6.5],[900,320,11,13],[915.5,320.5,8,4],[929,324,10,7],[942,322,10,9],[956,326,6,8],
  [672,358,9,5],[683,352,11,10.5],[721,355,10,7],[680,380.5,10,4.5],[695,386,9,4.5],[709,381,10,6.5],[763,384,9,5],[776,381,9,7],[791,378.5,10,12],[809,380,9,4.5],
  [675,421,9,4.5],[687,418.5,9,6.5],[703.5,417,10,12],[675,430,9,4.5],[687,427.5,9,6.5],[704,434.5,9,4],[719.5,432.5,10,6],[747,427.5,10,6],[764,418.5,10,4],[760,427.5,13.5,4]];
const sliders = [[561,225.5,27],[565,228.5,23],[610,229.5,23],[728,202,31],[838,204.5,26],[837,208.5,24],[922,213,24],[922,217,24],[644,359,24],[694,359,24],[644,390.5,33],[730,385,28],[642,419,28],[643,428,29]];
const dark = [[877,161.5,18,15.5],[905,171,10.5,6.5],[845,168.5,23,2.5],[835,172.5,23,3],[860,171,10,5]];
const panels = [[724.5,180.5,23,15,"#fff"],[844.5,213,21,8.5,"#fff"],[848.5,177,21,7.5,"url(#check)"],[922,154,40,24.5,"url(#check)"]];
document.getElementById("nodes").innerHTML =
  panels.map(([x, y, w, h, f]) => rect(x, y, w, h, f, "#888")).join("") +
  sliders.map(([x, y, w]) => rect(x, y, w, 2.5, "#ddd", "#777") + rect(x, y, w * .35, 2.5, "#8b8a9b")).join("") +
  dark.map(([x, y, w, h]) => rect(x, y, w, h, "#7f7f7f", "#555")).join("") +
  nodes.map(([x, y, w, h]) => rect(x, y, w, h, "url(#node)")).join("");
```
